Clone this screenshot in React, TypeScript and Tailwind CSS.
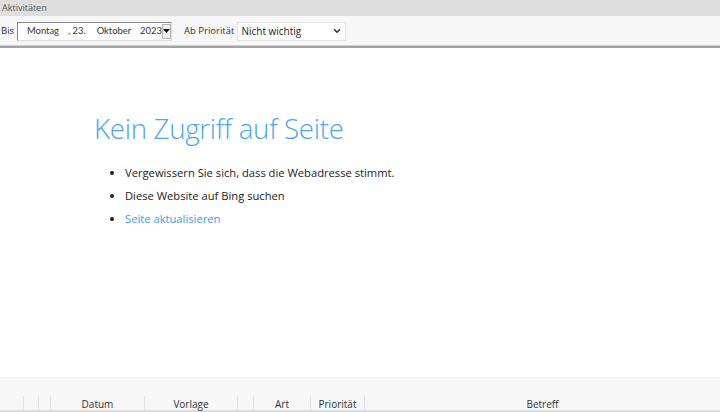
import React from "react";

const font = { fontFamily: '"Open Sans", "Noto Sans", sans-serif' };

function Column({ w, label, grow }: { w?: string; label?: string; grow?: boolean }) {
  return (
    <div
      className={`${grow ? "flex-1" : w} h-full border-l border-[#e2e2e2] flex items-end justify-center text-[10px] leading-[12px] text-[#333]`}
    >
      {label}
    </div>
  );
}

export default function App() {
  return (
    <div className="w-[720px] h-[412px] flex flex-col bg-white overflow-hidden" style={font}>
      {/* Title */}
      <div className="h-[16px] bg-[#dedede] flex items-center pl-[2px] text-[9px] text-[#555]">Aktivitäten</div>

      {/* Filter bar */}
      <div className="h-[32px] bg-[#f7f7f7] flex items-center pl-[1px] text-[9.5px] text-[#333] border-b-2 border-[#a3a3a3] shadow-[0_-1px_0_#cfcfcf_inset] whitespace-nowrap">
        <span>Bis</span>
        <div
          className="ml-[3px] w-[155px] h-[19px] bg-white border border-[#8a8a8a] border-r-[#dcdcdc] border-b-[#dcdcdc] flex items-center text-[9.4px] shrink-0"
          style={{ fontFamily: 'Lato, "Open Sans", sans-serif' }}
        >
          <span className="ml-[9px]">Montag</span>
          <span className="ml-[9px]">, 23.</span>
          <span className="ml-[11px]">Oktober</span>
          <span className="ml-[9px]">2023</span>
          <div className="ml-auto mr-[1px] w-[11px] h-[15px] bg-[#f0f0f0] border border-[#b5b5b5] flex items-center justify-center">
            <svg width="7" height="4" viewBox="0 0 7 4"><path d="M0 0h7L3.5 4z" fill="#111" /></svg>
          </div>
        </div>
        <span className="ml-[12px]">Ab Priorität</span>
        <div className="ml-[3px] w-[109px] h-[19px] bg-white border border-[#e4e4e4] flex items-center shrink-0">
          <span className="ml-[3px] text-[10px] text-[#222]">Nicht wichtig</span>
          <svg className="ml-auto mr-[4px]" width="8" height="6" viewBox="0 0 8 6">
            <path d="M1 1.2l3 3 3-3" fill="none" stroke="#333" strokeWidth="1.6" />
          </svg>
        </div>
      </div>

      {/* Content */}
      <div className="flex-1 bg-white pl-[94px] pt-[67px]">
        <h1 className="text-[27.7px] font-light text-[#4ca6f2] leading-none tracking-[-0.3px]">
          Kein Zugriff auf Seite
        </h1>
        <ul className="mt-[21px] ml-[31px] list-disc text-[11.2px] text-[#222] space-y-[6px] leading-[17px]">
          <li>Vergewissern Sie sich, dass die Webadresse stimmt.</li>
          <li>Diese Website auf Bing suchen</li>
          <li className="text-[#3b9ce8] marker:text-[#222]">Seite aktualisieren</li>
        </ul>
      </div>

      {/* Table header */}
      <div className="h-[35px] bg-[#f7f7f7] flex flex-col">
        <div className="flex-1" />
        <div className="h-[16px] flex border-b-2 border-[#dcdcdc]">
          <div className="w-[23px]" />
          <Column w="w-[15px]" />
          <Column w="w-[12px]" />
          <Column w="w-[94px]" label="Datum" />
          <Column w="w-[93px]" label="Vorlage" />
          <Column w="w-[16px]" />
          <Column w="w-[57px]" label="Art" />
          <Column w="w-[54px]" label="Priorität" />
          <Column grow label="Betreff" />
        </div>
      </div>
    </div>
  );
}
